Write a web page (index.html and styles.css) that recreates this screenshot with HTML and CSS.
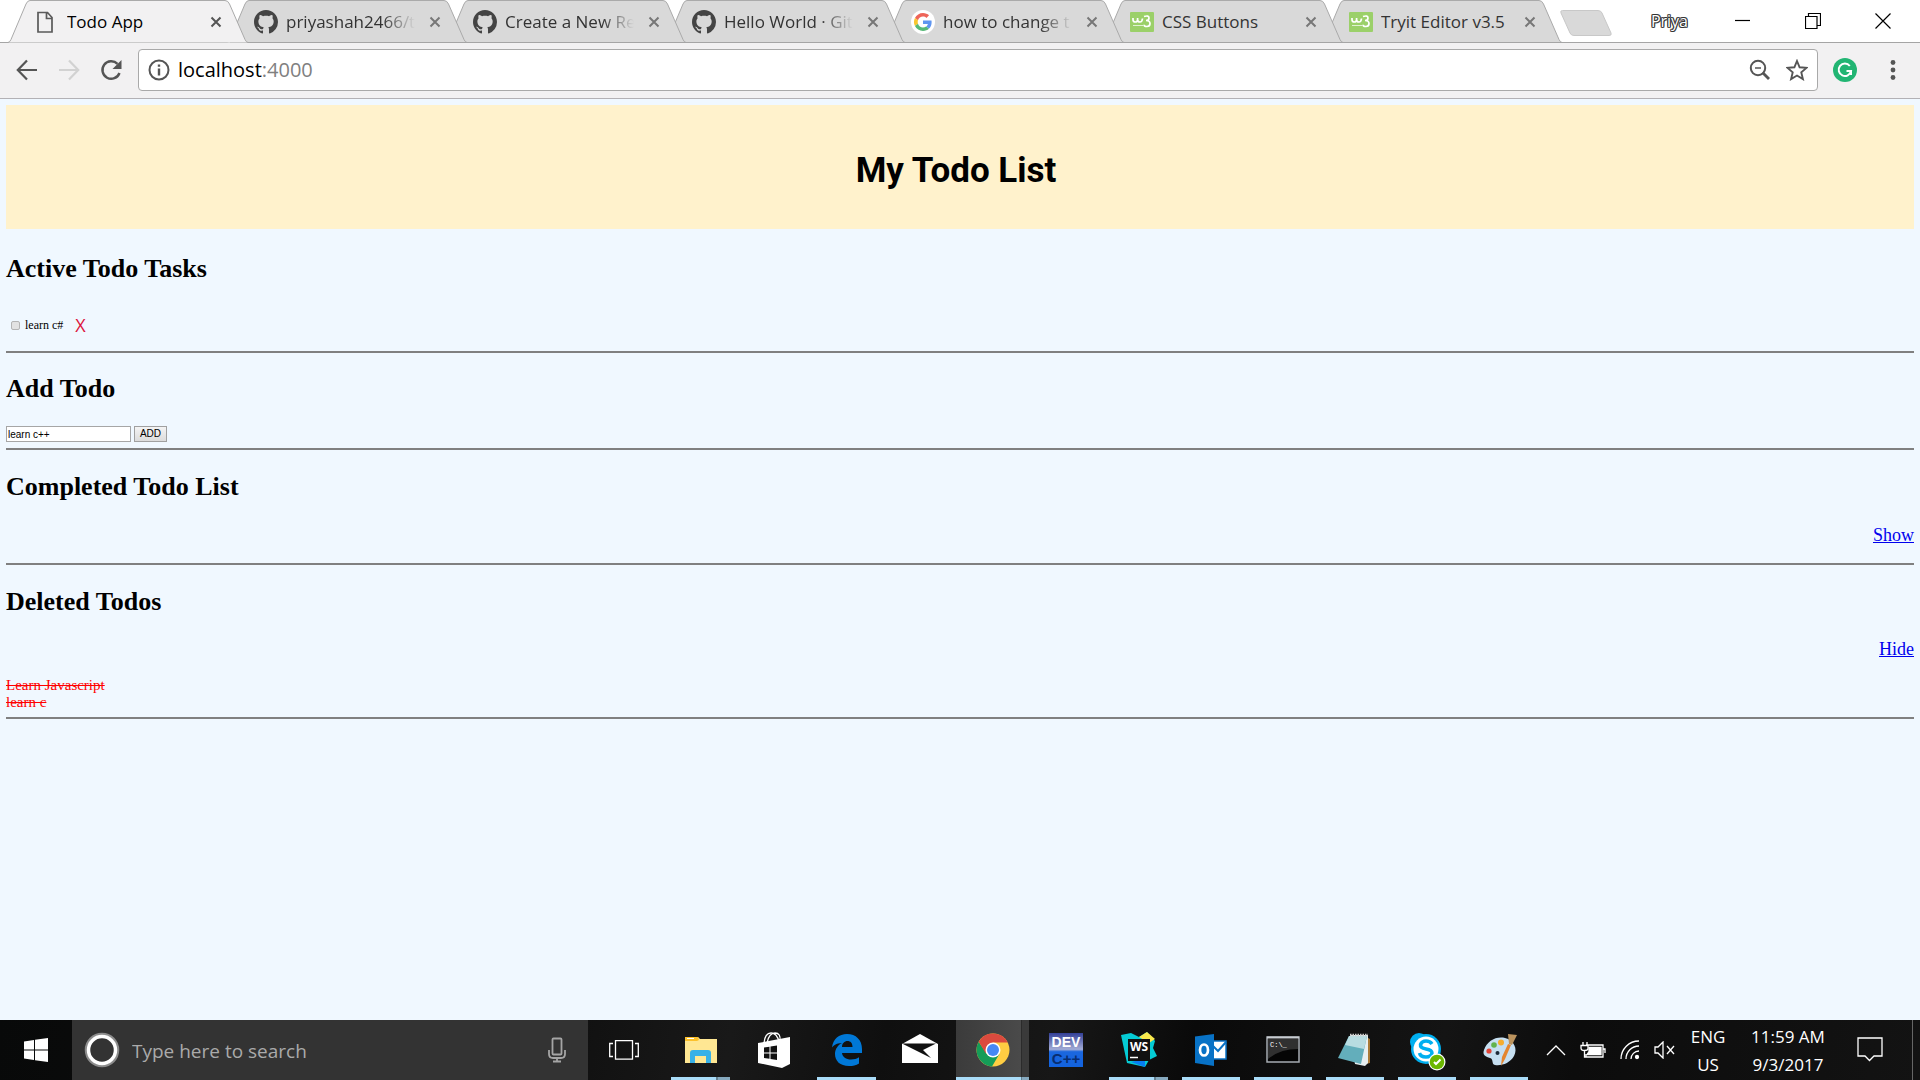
FILE: index.html
```html
<!DOCTYPE html>
<html lang="en">
<head>
<meta charset="utf-8">
<title>Todo App</title>
<link rel="stylesheet" href="styles.css">
</head>
<body>
<svg class="defs" aria-hidden="true">
  <defs>
    <symbol id="tab" viewBox="0 0 240 43" preserveAspectRatio="none">
      <path d="M0 42.5 Q2 42 3 39.500L18 4Q19.500 .5 22 .5H217Q220 .5 221.500 4L237 39.500Q238 42 240 42.500"/>
    </symbol>
    <symbol id="close" viewBox="0 0 12 12"><path d="M1.500 1.500l9 9M10.500 1.500l-9 9" fill="none" stroke="currentColor" stroke-width="2"/></symbol>
    <symbol id="github" viewBox="0 0 16 16"><path fill="#444" d="M8 0C3.58 0 0 3.58 0 8c0 3.54 2.29 6.53 5.47 7.59.4.07.55-.17.55-.38 0-.19-.01-.82-.01-1.490-2.010.37-2.530-.49-2.690-.94-.09-.23-.48-.94-.82-1.130-.28-.15-.68-.52-.01-.53.63-.01 1.080.58 1.230.82.72 1.210 1.870.87 2.330.66.07-.52.28-.87.51-1.070-1.780-.2-3.640-.89-3.640-3.950 0-.87.31-1.590.82-2.150-.08-.2-.36-1.020.08-2.120 0 0 .67-.21 2.200.82.64-.18 1.320-.27 2-.27s1.360.09 2 .27c1.530-1.040 2.200-.82 2.200-.82.44 1.100.16 1.920.08 2.120.51.56.82 1.270.82 2.150 0 3.070-1.870 3.750-3.650 3.950.29.25.54.73.54 1.480 0 1.070-.01 1.930-.01 2.200 0 .21.15.46.55.38A8.01 8.01 0 0 0 16 8c0-4.420-3.580-8-8-8z"/></symbol>
    <symbol id="google" viewBox="0 0 72 72"><circle cx="36" cy="36" r="36" fill="#fff"/><g transform="translate(9 9) scale(1.125)"><path fill="#ee6559" d="M24 9.500c3.540 0 6.710 1.220 9.210 3.600l6.850-6.850C35.900 2.380 30.470 0 24 0 14.620 0 6.510 5.380 2.560 13.220l7.980 6.190C12.430 13.720 17.740 9.500 24 9.500z"/><path fill="#5f96f0" d="M46.980 24.550c0-1.570-.15-3.090-.38-4.550H24v9.020h12.940c-.58 2.960-2.260 5.480-4.780 7.180l7.730 6c4.510-4.180 7.090-10.360 7.090-17.650z"/><path fill="#f9c62e" d="M10.530 28.590A14.500 14.500 0 0 1 10.530 19.410l-7.980-6.190a24 24 0 0 0 0 21.560z"/><path fill="#57b977" d="M24 48c6.480 0 11.930-2.130 15.890-5.810l-7.730-6c-2.150 1.450-4.920 2.300-8.160 2.300-6.260 0-11.570-4.220-13.470-9.910l-7.980 6.190C6.510 42.620 14.620 48 24 48z"/></g></symbol>
    <symbol id="w3" viewBox="0 0 24 24"><rect y="2" width="24" height="20" rx="1" fill="#9bd069"/><path d="M3 8v1.500q0 2.500 2.300 2.500T7.600 9.500V8v1.500q0 2.500 2.300 2.500t2.600-3.500M14 6.500q5-1.500 5 1.500 0 2.500-3 2.500 4 0 4 3T17 16.500t-3-1.700" fill="none" stroke="#fff" stroke-width="1.700"/><path d="M3 15.500h10" stroke="#fff" stroke-opacity=".7"/></symbol>
  </defs>
</svg>

<header class="browser">
  <div class="strip">
    <nav class="tabs" aria-label="Open tabs">
      <div class="tab active">
        <svg class="shape"><use href="#tab"/></svg>
        <svg class="fav" viewBox="0 0 24 24"><path d="M3 2.500H12.500L17 7.500V22H3zM11.500 3v5.500H17" fill="none" stroke="#5a5a5a" stroke-width="1.700"/></svg>
        <button class="title">Todo App</button>
        <button class="x" aria-label="Close tab"><svg><use href="#close"/></svg></button>
      </div>
      <div class="tab">
        <svg class="shape"><use href="#tab"/></svg>
        <svg class="fav"><use href="#github"/></svg>
        <button class="title fade">priyashah2466/t</button>
        <button class="x" aria-label="Close tab"><svg><use href="#close"/></svg></button>
      </div>
      <div class="tab">
        <svg class="shape"><use href="#tab"/></svg>
        <svg class="fav"><use href="#github"/></svg>
        <button class="title fade">Create a New Re</button>
        <button class="x" aria-label="Close tab"><svg><use href="#close"/></svg></button>
      </div>
      <div class="tab">
        <svg class="shape"><use href="#tab"/></svg>
        <svg class="fav"><use href="#github"/></svg>
        <button class="title fade">Hello World · Git</button>
        <button class="x" aria-label="Close tab"><svg><use href="#close"/></svg></button>
      </div>
      <div class="tab">
        <svg class="shape"><use href="#tab"/></svg>
        <svg class="fav"><use href="#google"/></svg>
        <button class="title fade">how to change t</button>
        <button class="x" aria-label="Close tab"><svg><use href="#close"/></svg></button>
      </div>
      <div class="tab">
        <svg class="shape"><use href="#tab"/></svg>
        <svg class="fav"><use href="#w3"/></svg>
        <button class="title">CSS Buttons</button>
        <button class="x" aria-label="Close tab"><svg><use href="#close"/></svg></button>
      </div>
      <div class="tab">
        <svg class="shape"><use href="#tab"/></svg>
        <svg class="fav"><use href="#w3"/></svg>
        <button class="title">Tryit Editor v3.5</button>
        <button class="x" aria-label="Close tab"><svg><use href="#close"/></svg></button>
      </div>
      <button class="newtab" aria-label="New tab"><svg viewBox="0 0 52 26"><path d="M2.500.5H38Q41 .5 42 3L51 23Q52 25.500 49 25.500H14Q11 25.500 10 23L1 3Q0 .5 2.500.5z" fill="#d9d9d9" stroke="#c8c8c8"/></svg></button>
    </nav>
    <div class="window">
      <button class="user">Priya</button>
      <button class="ctl" aria-label="Minimise"><svg viewBox="0 0 16 16"><path d="M0 7.500h15"/></svg></button>
      <button class="ctl" aria-label="Restore"><svg viewBox="0 0 16 16"><path d="M.5 3.500h11.500v12H.5zM3.500 3.500v-3h12v12h-3"/></svg></button>
      <button class="ctl" aria-label="Close"><svg viewBox="0 0 16 16"><path d="M.5.5l15 15M15.500.5l-15 15"/></svg></button>
    </div>
  </div>
  <div class="toolbar">
    <button class="nav" aria-label="Back"><svg viewBox="0 0 24 24"><path d="M22 12H3.500M12 2.500L2.800 12l9.200 9.500" fill="none" stroke="#555" stroke-width="2.200"/></svg></button>
    <button class="nav" aria-label="Forward"><svg viewBox="0 0 24 24"><path d="M2 12h18.500M12 2.500l9.200 9.500-9.200 9.500" fill="none" stroke="#d2d2d2" stroke-width="2.200"/></svg></button>
    <button class="nav" aria-label="Reload"><svg viewBox="0 0 24 24"><path d="M20.500 15a8.800 8.800 0 1 1-2-9.200" fill="none" stroke="#555" stroke-width="2.400"/><path d="M22.500 2v9h-9z" fill="#555"/></svg></button>
    <div class="address">
      <svg viewBox="0 0 22 22"><circle cx="11" cy="11" r="9.500" fill="none" stroke="#555" stroke-width="2"/><path d="M9.800 5.500h2.400v2.200H9.800zM9.800 9.500h2.400v7H9.800z" fill="#555"/></svg>
      <div class="url">localhost<span>:4000</span></div>
      <button aria-label="Zoom"><svg viewBox="0 0 22 22"><circle cx="9" cy="9" r="7.200" fill="none" stroke="#555" stroke-width="2"/><path d="M6 9h6" stroke="#555" stroke-width="1.500"/><path d="M13.500 13.500l6.500 6.500" stroke="#555" stroke-width="2.800"/></svg></button>
      <button aria-label="Bookmark"><svg viewBox="0 0 22 22"><path d="M11 2l2.600 6.300 6.900.6-5.200 4.500 1.600 6.700L11 16.500l-5.900 3.600 1.600-6.700L1.500 8.900l6.900-.6z" fill="none" stroke="#555" stroke-width="1.900"/></svg></button>
    </div>
    <button class="ext" aria-label="Grammarly"><svg viewBox="0 0 24 24"><circle cx="12" cy="12" r="12" fill="#22b573"/><path d="M16.800 8A6.200 6.200 0 1 0 18 13h-4.500M18 12.500V17" fill="none" stroke="#fff" stroke-width="2"/></svg></button>
    <button class="ext" aria-label="Menu"><svg viewBox="0 0 24 24" fill="#555"><circle cx="12" cy="4.500" r="2.400"/><circle cx="12" cy="12" r="2.400"/><circle cx="12" cy="19.500" r="2.400"/></svg></button>
  </div>
</header>

<main class="page">
  <div class="banner"><h1>My Todo List</h1></div>
  <section class="active-list">
    <h2>Active Todo Tasks</h2>
    <div class="task">
      <input type="checkbox" id="task1"><label for="task1">learn c#</label>
      <button class="del" aria-label="Delete">X</button>
    </div>
  </section>
  <section class="new">
    <h2>Add Todo</h2>
    <form class="add"><input type="text" value="learn c++" aria-label="New todo"><button type="button">ADD</button></form>
  </section>
  <section class="completed">
    <h2>Completed Todo List</h2>
    <a class="toggle" href="#">Show</a>
  </section>
  <section class="deleted">
    <h2>Deleted Todos</h2>
    <a class="toggle" href="#">Hide</a>
    <ul><li>Learn Javascript</li><li>learn c</li></ul>
  </section>
</main>

<footer class="taskbar">
  <button class="start" aria-label="Start"><svg width="24" height="24" viewBox="0 0 24 24" fill="#fff"><path d="M0 3.400L10 2v9.500H0zM11 1.800L24 0v11.500H11zM0 12.500h10V22L0 20.600zM11 12.500h13V24l-13-1.800z"/></svg></button>
  <label class="search">
    <svg width="36" height="36" viewBox="0 0 36 36"><circle cx="18" cy="18" r="16" fill="none" stroke="#8c8c8c" stroke-width="2.500"/><circle cx="18" cy="18" r="13.500" fill="none" stroke="#fff" stroke-width="3.500"/></svg>
    <input type="text" placeholder="Type here to search" aria-label="Search">
    <svg width="18" height="26" viewBox="0 0 18 26" fill="none" stroke="#a5a5a5" stroke-width="1.800"><rect x="4.500" y="1.500" width="9" height="16" rx="1"/><path d="M1 13v4q0 4 4 4h8q4 0 4-4v-4M9 21v3.500M5 24.500h8"/></svg>
  </label>
  <button class="view" aria-label="Task view"><svg width="30" height="20" viewBox="0 0 30 20" fill="none" stroke="#fff" stroke-width="1.300"><path d="M6.500.7h17v18.500h-17zM4 3.500H.7v13H4M26 3.500h3.300v13H26"/></svg></button>
  <div class="apps">
    <button class="app open multi" aria-label="File Explorer"><svg viewBox="0 0 36 36"><path d="M2 5h13l2 2h17v24H2z" fill="#ffe793"/><path d="M2 5h13l1 3-2 1H2z" fill="#fcc12c"/><path d="M4 6.500h7" stroke="#fff"/><path d="M7 31V21q0-3 3-3h15q3 0 3 3v10h-5v-7H12v7z" fill="#38b1e7"/></svg></button>
    <button class="app" aria-label="Store"><svg viewBox="0 0 36 36"><path d="M2 11l32-6v27l-8 4L2 31z" fill="#fff"/><path d="M8 11Q9 1 15 1t8 9M11 11Q13 1 19 1t5 8" fill="none" stroke="#fff" stroke-width="1.300"/><path d="M8 15.500l5.500-.8v5.800H8zM14.500 14.600l6.500-1v6.900h-6.500zM8 21.500h5.500v5.300L8 26zM14.500 21.500H21V28l-6.500-1z" fill="#111"/></svg></button>
    <button class="app open" aria-label="Edge"><svg viewBox="0 0 36 36"><path d="M3 15.500C4 7 10 2 18 2c9 0 15 6 15 15v4H13c.5 4 4 6.500 9 6.500 3 0 6-.8 8-2.200v6.200C27 33.500 24 34 20 34 11 34 6 29 6 22c0-5 3-9 7-11-6 0-9 3-10 4.500zM13 15h10.500C23.500 11 21.500 9 18.500 9S13 11.500 13 15z" fill="#0078d7"/></svg></button>
    <button class="app" aria-label="Mail"><svg viewBox="0 0 36 36"><path d="M0 12L18 2l18 10v19H0z" fill="#fff"/><path d="M1 11.500h33L21 18l8 8L1 12z" fill="#111"/></svg></button>
    <button class="app open multi current" aria-label="Chrome"><svg viewBox="0 0 36 36"><circle cx="18" cy="18" r="16.500" fill="#ffcd42"/><path d="M3.700 9.800A16.500 16.500 0 0 0 17 34.500l7.500-12.700L12 22z" fill="#159c58"/><path d="M18 10.500h14.700A16.500 16.500 0 0 0 3.700 9.800l7 11.500z" fill="#db4a3e"/><circle cx="18" cy="18" r="7.500" fill="#fff"/><circle cx="18" cy="18" r="6" fill="#4688f4"/></svg></button>
    <button class="app" aria-label="Dev-C++"><svg viewBox="0 0 36 36"><defs><linearGradient id="dv" x2="0" y2="1"><stop stop-color="#334098"/><stop offset=".48" stop-color="#a2abd5"/><stop offset=".55" stop-color="#1b67df"/><stop offset="1" stop-color="#1263df"/></linearGradient></defs><path d="M1 1h34v34H1z" fill="url(#dv)"/><text x="18" y="15" text-anchor="middle" font-family="Liberation Sans,sans-serif" font-weight="700" font-size="14" fill="#fff">DEV</text><text x="18" y="32" text-anchor="middle" font-family="Liberation Sans,sans-serif" font-weight="700" font-size="15" fill="#082d70">C++</text></svg></button>
    <button class="app open multi" aria-label="WebStorm"><svg viewBox="0 0 36 36"><path d="M0 3l10-2 8 4 8-5 8 9-2 7 4 8-8 4-4 7-18-4z" fill="#05cbd4"/><path d="M18 5l8-5 8 7-6 4z" fill="#f9e94d"/><path d="M10 30l14-3v8z" fill="#087cf1"/><path d="M7 7h22v22H7z" fill="#111"/><text x="18" y="18.500" text-anchor="middle" font-family="Open Sans,sans-serif" font-weight="700" font-size="12" fill="#fff">WS</text><path d="M9 25.500h8" stroke="#fff" stroke-width="1.500"/></svg></button>
    <button class="app open" aria-label="Outlook"><svg viewBox="0 0 36 36"><path d="M19 9h14v18H19z" fill="#fff" stroke="#0872c6" stroke-width="1.500"/><path d="M19 13l6 6 8-9" fill="none" stroke="#0872c6" stroke-width="2"/><path d="M2 4.500L21 2v32L2 31z" fill="#0872c6"/><ellipse cx="11" cy="18" rx="4" ry="5.500" fill="none" stroke="#fff" stroke-width="2.700"/></svg></button>
    <button class="app open" aria-label="Command Prompt"><svg viewBox="0 0 36 36"><path d="M2 5h32v25H2z" fill="#050505" stroke="#a6acb2" stroke-width="1.500"/><path d="M3 7h30v10Q15 17 3 27z" fill="#303030"/><path d="M2 5.500h32" stroke="#c8ccd1" stroke-width="2"/><text x="5" y="14.500" font-family="Liberation Mono,monospace" font-size="7" fill="#fff">C:\_</text></svg></button>
    <button class="app open" aria-label="Notepad"><svg viewBox="0 0 36 36"><path d="M27 4l6 3v24l-4 1z" fill="#a87936"/><path d="M13 3h18v28l-3 3-10-2z" fill="#e6eef0"/><path d="M12 4h18l-6 28L1 26z" fill="#63aebb"/><path d="M12 4h18l-3 13L8 13z" fill="#b8dce1"/><path d="M13 3h18" stroke="#ccc" stroke-width="2.500" stroke-dasharray="1.500 1"/></svg></button>
    <button class="app open" aria-label="Skype"><svg viewBox="0 0 36 36"><circle cx="10" cy="10" r="9" fill="#00aff0"/><circle cx="24" cy="25" r="8" fill="#00aff0"/><circle cx="17" cy="17" r="15" fill="#00aff0"/><circle cx="17" cy="17" r="12.500" fill="#fff"/><path d="M23 12Q21 9 17 9t-5.500 3.500Q11 16 17 17t6 4q-.5 4-6 4t-6.500-4" fill="none" stroke="#00aff0" stroke-width="3.500"/><circle cx="28" cy="30" r="8.500" fill="#fff"/><circle cx="28" cy="30" r="7.300" fill="#6bb700"/><path d="M25 30l2 2 4.500-4.500" fill="none" stroke="#fff" stroke-width="2"/></svg></button>
    <button class="app open" aria-label="Paint"><svg viewBox="0 0 36 36"><path d="M3 18C6 9 15 4 24 6s13 11 9 18-12 10-19 9c-4-1-1-6-5-7s-8-3-6-8z" fill="#c6dff1"/><circle cx="8" cy="19" r="2.600" fill="#e34537"/><circle cx="13" cy="13" r="2.800" fill="#62b34c"/><circle cx="20" cy="10.500" r="3" fill="#f6ad2e"/><circle cx="16.500" cy="21" r="2" fill="#1c2b39"/><path d="M20 34l1-9 6-13 3 1-6 14z" fill="#e4852e"/><path d="M28 12l-1-10 9 1-5 10z" fill="#bb935d"/></svg></button>
  </div>
  <div class="tray">
    <button aria-label="Hidden icons"><svg width="20" height="12" viewBox="0 0 20 12"><path d="M1 11l9-9 9 9"/></svg></button>
    <button aria-label="Battery"><svg width="26" height="18" viewBox="0 0 26 18"><path d="M6 4h17v12H6v-3M23 8h2v4M3 1v3M7 1v3M1 4.500h7v3q0 2-3.500 2T1 7zM4.500 10v6H7"/><path d="M9 6.500h12v7H7l2-3z" fill="#fff"/></svg></button>
    <button aria-label="Network"><svg width="20" height="20" viewBox="0 0 20 20"><path d="M1 19A18 18 0 0 1 19 1M6 19A13 13 0 0 1 19 6M11 19a8 8 0 0 1 8-8"/><circle cx="17" cy="17" r="1.500" fill="#fff"/></svg></button>
    <button aria-label="Volume"><svg width="22" height="18" viewBox="0 0 22 18"><path d="M1 6h3l5-5v16l-5-5H1zM13 5l7 8M20 5l-7 8"/></svg></button>
    <div class="lang">ENG<br>US</div>
    <div class="clock">11:59 AM<br>9/3/2017</div>
    <button class="notes" aria-label="Notifications"><svg width="26" height="26" viewBox="0 0 26 26"><path d="M1 1h24v18h-8l-4.500 4.500L8 19H1z"/></svg></button>
  </div>
</footer>
</body>
</html>
```
FILE: styles.css
```css
* { box-sizing: border-box; }
body {
  margin: 0;
  min-height: 100vh;
  display: flex;
  flex-direction: column;
  background: #f0f8ff;
  font-family: "Liberation Serif", "Times New Roman", serif;
}
button { border: 0; padding: 0; background: none; font: inherit; color: inherit; }
svg { display: block; flex: none; }
.defs { position: absolute; width: 0; height: 0; }

/* browser frame */
.browser { font-family: "Open Sans", sans-serif; background: #f2f1f2; border-bottom: 1px solid #b3b1b5; }
.strip {
  display: flex;
  justify-content: space-between;
  height: 43px;
  padding-left: 8px;
  background: linear-gradient(#a5a5a5, #a5a5a5) bottom / 100% 1px no-repeat #fff;
}
.tabs { display: flex; isolation: isolate; }
.tab {
  position: relative;
  display: flex;
  align-items: center;
  width: 240px;
  height: 43px;
  margin-right: -21px;
  padding: 0 26px 0 27px;
  color: #333;
  --fill: #d9d9d9;
}
.tab.active { --fill: #f2f1f2; color: #000; }
.tab:nth-child(1) { z-index: 7; }
.tab:nth-child(2) { z-index: 6; }
.tab:nth-child(3) { z-index: 5; }
.tab:nth-child(4) { z-index: 4; }
.tab:nth-child(5) { z-index: 3; }
.tab:nth-child(6) { z-index: 2; }
.tab:nth-child(7) { z-index: 1; }
.shape { position: absolute; inset: 0; z-index: -1; width: 100%; height: 100%; fill: var(--fill); stroke: #aaa; }
.tab:not(.active)::after { content: ""; position: absolute; left: 3px; right: 0; bottom: 0; height: 1px; background: #a5a5a5; }
.fav { width: 24px; height: 24px; margin-right: 8px; }
.title {
  flex: 1;
  min-width: 0;
  overflow: hidden;
  white-space: nowrap;
  text-align: left;
  font-size: 17px;
  line-height: 24px;
}
.fade {
  -webkit-mask-image: linear-gradient(90deg, #000 75%, transparent);
  mask-image: linear-gradient(90deg, #000 75%, transparent);
}
.x { margin-left: 14px; color: #777; }
.active .x { color: #555; }
.x svg { width: 12px; height: 12px; }
.newtab { margin: 10px 0 0 19px; height: 26px; }
.newtab svg { width: 52px; height: 26px; }
.window { display: flex; align-items: center; height: 41px; padding-right: 2px; }
.user {
  margin-right: 20px;
  font-size: 16px;
  color: #fff;
  text-shadow: 1px 0 #333, -1px 0 #333, 0 1px #333, 0 -1px #333, 1px 1px #666, -1px -1px #666, 1px -1px #666, -1px 1px #666;
}
.ctl { display: flex; justify-content: center; width: 70px; }
.ctl svg { width: 16px; height: 16px; fill: none; stroke: #000; stroke-width: 1.2; }
.toolbar { display: flex; align-items: center; height: 55px; padding: 0 15px 2px; }
.nav { margin-right: 18px; }
.nav svg, .ext svg { width: 24px; height: 24px; }
.address {
  flex: 1;
  display: flex;
  align-items: center;
  height: 42px;
  margin-right: 15px;
  margin-left: -3px;
  padding: 0 9px;
  border: 1px solid #a9a9a9;
  border-radius: 4px;
  background: #fff;
}
.address svg { width: 22px; height: 22px; }
.address button { margin-left: 15px; }
.url { flex: 1; padding-left: 8px; font-size: 20px; }
.url span { color: #808080; }
.ext + .ext { margin-left: 24px; }

/* todo page */
.page { flex: 1; padding: 6px; }
.banner { display: flex; justify-content: center; align-items: center; height: 124px; padding: 8px 8px 0 0; background: #fff2cc; }
h1 { margin: 0; font-family: Roboto, "Liberation Sans", Arial, sans-serif; font-size: 35px; line-height: 38px; }
h2 { margin: 0 0 22px; font-size: 26px; line-height: 30px; }
section { padding-top: 22px; border-bottom: 2px solid #808080; }
.active-list { padding-top: 25px; }
.task { display: flex; align-items: center; padding: 14px 5px; font-size: 12px; line-height: 14px; }
.active-list h2 { margin-bottom: 15px; }
.task input { width: 9px; height: 9px; margin: 0 5px 0 0; appearance: none; border: 1px solid #b4b4b4; border-radius: 2px; background: #e2e2e2; }
.del { margin-left: 12px; color: crimson; font-family: "Open Sans", sans-serif; font-size: 18px; line-height: 24px; }
.new { padding-top: 21px; }
.add { display: flex; gap: 3px; padding-bottom: 6px; }
.add input, .add button { height: 16px; font-family: "Liberation Sans", Arial, sans-serif; font-size: 10px; line-height: 12px; }
.add input { width: 125px; padding: 0 1px; border: 1px solid #a6a6a6; background: #fff; }
.add button { width: 33px; border: 1px solid #a0a0a0; background: linear-gradient(#f4f4f4, #dcdcdc); }
.toggle { display: block; margin-left: auto; width: fit-content; color: #00e; font-size: 18px; line-height: 20px; }
.completed { padding-bottom: 18px; }
.completed h2 { margin-bottom: 23px; }
ul { margin: 0; padding: 18px 0 6px; list-style: none; color: red; font-size: 15px; line-height: 17px; text-decoration: line-through; }

/* desktop taskbar */
.taskbar {
  display: flex;
  height: 60px;
  color: #fff;
  font-family: "Open Sans", sans-serif;
  background: linear-gradient(100deg, #080909, #111 30%, #191919 38%, #0f0f0f 46%, #171717 55%, #0a0a0a 62%, #141414 75%, #0c0c0c 82%, #131313);
}
.start, .view { display: flex; align-items: center; justify-content: center; width: 72px; }
.view { margin-right: 4px; }
.search { display: flex; align-items: center; width: 516px; padding: 0 22px 0 12px; background: #333; }
.search input { flex: 1; min-width: 0; padding: 2px 0 0 12px; border: 0; background: none; color: #aaa; font-family: inherit; font-size: 19px; }
.search input::placeholder { color: #aaa; opacity: 1; }
.apps { display: grid; grid-template-columns: repeat(7, 73px) repeat(5, 72px); }
.app { position: relative; display: flex; align-items: center; justify-content: center; }
.app svg { width: 36px; height: 36px; overflow: visible; }
.app::after { position: absolute; left: 7px; right: 7px; bottom: 0; height: 3px; }
.open::after { content: ""; background: #a9dcf8; }
.multi::after { background: linear-gradient(90deg, #a9dcf8 76%, #64808f 76% 79%, #86a9be 79%); }
.current { background: linear-gradient(90deg, #3b3b3b, #4a4a4a 89%, #2b2b2b 89% 91%, #3a3a3a 91%); }
.current::after { left: 0; right: 0; background: linear-gradient(90deg, #a9dcf8 89%, #64808f 89% 91%, #86a9be 91%); }
.tray { display: flex; align-items: center; margin-left: auto; border-right: 1px solid #666; margin-right: 7px; font-size: 17px; line-height: 28px; text-align: center; }
.tray button { margin-right: 14px; }
.tray svg { fill: none; stroke: #fff; stroke-width: 1.3; }
.lang, .clock { padding-top: 2px; }
.lang { width: 36px; margin-right: 22px; }
.clock { width: 80px; }
.tray .notes { margin: 0 29px; }
```
